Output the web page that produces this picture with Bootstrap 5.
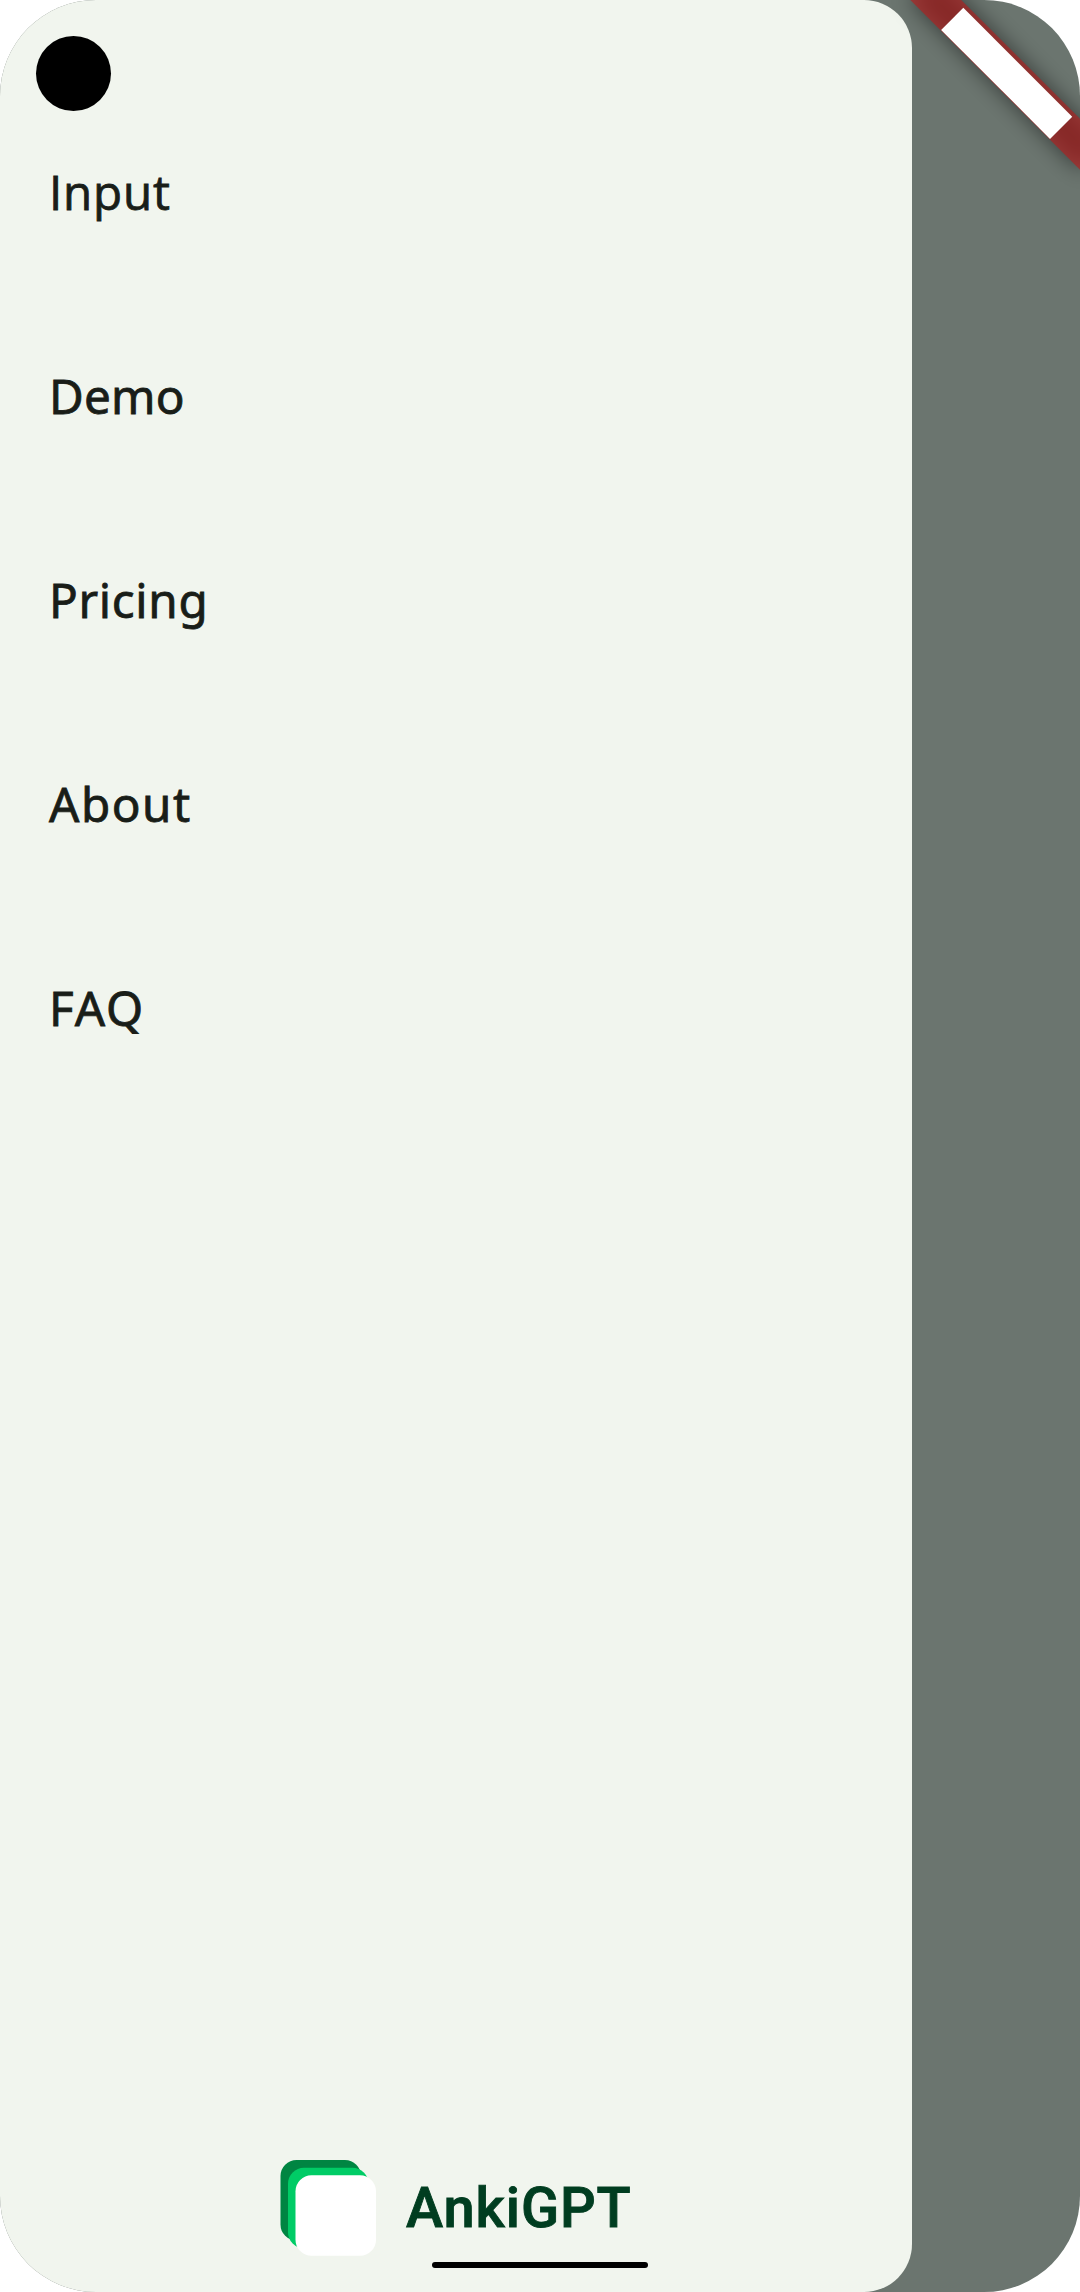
<!DOCTYPE html>
<html lang="en">
<head>
<meta charset="utf-8">
<meta name="viewport" content="width=device-width, initial-scale=1">
<title>AnkiGPT</title>
<link href="https://cdn.jsdelivr.net/npm/bootstrap@5.3.0/dist/css/bootstrap.min.css" rel="stylesheet">
<style>
  body { background: #fff; }
  .phone-screen { width: 1080px; height: 2292px; border-radius: 96px; background: #6b756f; }
  .side-drawer { width: 912px; background: #f1f5ee; border-radius: 0 48px 48px 0; padding-top: 90px; padding-bottom: 35px; }
  .camera-hole { width: 75px; height: 75px; left: 36px; top: 36px; background: #000; }
  .menu-entry {
    height: 204px; padding-left: 49px; line-height: 204px;
    font-family: "Noto Sans", "Open Sans", sans-serif; font-size: 47.6px; color: #191d18;
    -webkit-text-stroke: .8px #191d18;
  }
  .brand-name {
    font-family: Roboto, "Liberation Sans", sans-serif; font-weight: 500; font-size: 56px;
    line-height: 80px; padding-bottom: 2px; color: #003d20; letter-spacing: .9px; -webkit-text-stroke: .9px #003d20;
  }
  .brand-row { padding-left: 280px; gap: 29px; }
  .home-bar { left: 432px; top: 2262px; width: 216px; height: 6px; background: #000; }
  .ls-input { font-family: "Open Sans", "Noto Sans", sans-serif; letter-spacing: .8px; }
  .ls-demo { letter-spacing: .2px; }
  .ls-pricing { letter-spacing: .7px; }
  .ls-about { letter-spacing: 1.5px; }
  .ls-faq { letter-spacing: 1.9px; }
</style>
</head>
<body>
<main class="phone-screen position-relative overflow-hidden d-flex">
  <nav class="side-drawer d-flex flex-column justify-content-between">
    <ul class="list-unstyled mb-0">
      <li class="menu-entry ls-input">Input</li>
      <li class="menu-entry ls-demo">Demo</li>
      <li class="menu-entry ls-pricing">Pricing</li>
      <li class="menu-entry ls-about">About</li>
      <li class="menu-entry ls-faq">FAQ</li>
    </ul>
    <div class="brand-row d-flex align-items-center">
      <svg width="97" height="97" viewBox="0 0 97 97" aria-hidden="true">
        <rect x=".5" y="0" width="80.5" height="80.5" rx="16" fill="#008542"/>
        <rect x="8" y="7.7" width="80.5" height="80.5" rx="16" fill="#00cc66"/>
        <rect x="15.5" y="15.3" width="80.5" height="80.5" rx="16" fill="#fff"/>
      </svg>
      <span class="brand-name">AnkiGPT</span>
    </div>
  </nav>
  <div class="camera-hole position-absolute rounded-circle"></div>
  <svg class="position-absolute top-0 end-0" width="240" height="240" viewBox="840 0 240 240" aria-hidden="true">
    <defs>
      <filter id="ribbonShadow" x="-180" y="30" width="360" height="150" filterUnits="userSpaceOnUse">
        <feGaussianBlur stdDeviation="11"/>
      </filter>
    </defs>
    <g transform="translate(1080 0) rotate(45)">
      <rect x="-120" y="84" width="240" height="36" fill="#000" fill-opacity=".5" filter="url(#ribbonShadow)"/>
      <rect x="-120" y="84" width="240" height="36" fill="#b71c1c" fill-opacity=".627"/>
      <rect x="-77" y="88" width="154" height="31.4" fill="#fff"/>
    </g>
  </svg>
  <div class="home-bar position-absolute rounded-pill"></div>
</main>
<script src="https://cdn.jsdelivr.net/npm/bootstrap@5.3.0/dist/js/bootstrap.bundle.min.js"></script>
</body>
</html>
